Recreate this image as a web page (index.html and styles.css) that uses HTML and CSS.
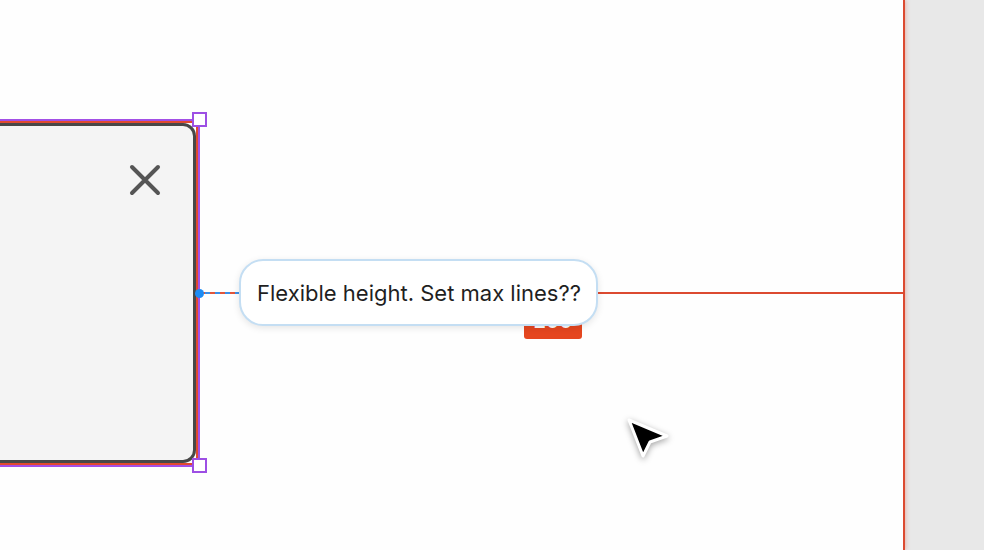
FILE: index.html
```html
<!DOCTYPE html>
<html lang="en">
<head>
    <meta charset="UTF-8">
    <meta name="viewport" content="width=device-width, initial-scale=1.0">
    <title>Spec canvas</title>
    <link rel="stylesheet" href="styles.css">
</head>
<body>
    <div class="app">
        <div class="canvas">
            <!-- selected frame -->
            <div class="selection">
                <div class="selection-inner">
                    <div class="card">
                        <svg class="close-icon" width="32" height="32" viewBox="0 0 32 32">
                            <path d="M3 3 L29 29 M29 3 L3 29" stroke="#555" stroke-width="4" stroke-linecap="round" fill="none"/>
                        </svg>
                    </div>
                </div>
            </div>
            <div class="handle handle-top"></div>
            <div class="handle handle-bottom"></div>

            <div class="connector"></div>
            <div class="anchor-dot"></div>
            <div class="measure-line"></div>

            <div class="badge">200</div>
            <div class="note">Flexible height. Set max lines??</div>

            <svg class="cursor" width="50" height="50" viewBox="0 0 50 50">
                <path d="M5 4 L43 20 L26 26 L19 40 Z" fill="#000" stroke="#fff" stroke-width="3" stroke-linejoin="round"/>
            </svg>
        </div>
        <div class="side-panel"></div>
    </div>
</body>
</html>
```

FILE: styles.css
```css
body {
    margin: 0;
    font-family: Inter, "Noto Sans", sans-serif;
    background: #fff;
    overflow: hidden;
}
.app {
    display: flex;
    height: 550px;
    width: 984px;
}
.canvas {
    position: relative;
    width: 903px;
    flex: none;
    background: #fefefe;
    border-right: 2px solid #dc4a30;
    box-shadow: 1px 0 4px rgba(230, 90, 60, 0.35);
    z-index: 1;
}
.side-panel {
    flex: 1;
    background: #e8e8e8;
}
.selection {
    position: absolute;
    left: -40px;
    top: 119px;
    width: 238px;
    height: 344px;
    border: 2px solid #a24fe6;
    border-left: none;
}
.selection-inner {
    height: 100%;
    box-sizing: border-box;
    border: 2px solid #e0492f;
    border-left: none;
}
.card {
    position: relative;
    height: 100%;
    box-sizing: border-box;
    background: #f4f4f4;
    border: 3px solid #474747;
    border-left: none;
    border-radius: 0 13px 13px 0;
}
.close-icon {
    position: absolute;
    left: 169px;
    top: 38px;
}
.handle {
    position: absolute;
    left: 192px;
    width: 11px;
    height: 11px;
    background: #fff;
    border: 2px solid #9d4fe4;
}
.handle-top {
    top: 112px;
}
.handle-bottom {
    top: 458px;
}
.connector {
    position: absolute;
    left: 200px;
    top: 292px;
    width: 40px;
    height: 2px;
    background: repeating-linear-gradient(90deg, #e0553a 0 5px, #3b8fe6 5px 10px);
}
.anchor-dot {
    position: absolute;
    left: 195px;
    top: 289px;
    width: 9px;
    height: 9px;
    border-radius: 50%;
    background: #1c8cf5;
}
.measure-line {
    position: absolute;
    left: 598px;
    top: 292px;
    width: 305px;
    height: 2px;
    background: #dc4a30;
}
.badge {
    position: absolute;
    left: 524px;
    top: 308px;
    width: 58px;
    height: 31px;
    border-radius: 3px;
    background: #e5461f;
    color: #fff;
    font-size: 20px;
    font-weight: 600;
    line-height: 26px;
    text-align: center;
}
.note {
    position: absolute;
    left: 239px;
    top: 259px;
    width: 359px;
    height: 67px;
    box-sizing: border-box;
    padding: 0 16px;
    display: flex;
    align-items: center;
    background: #fff;
    border: 2px solid #c4def3;
    border-radius: 24px;
    box-shadow: 0 2px 7px rgba(0, 0, 0, 0.1);
    color: #1f1f1f;
    font-size: 22px;
    white-space: nowrap;
}
.cursor {
    position: absolute;
    left: 624px;
    top: 416px;
    filter: drop-shadow(0 2px 3px rgba(0, 0, 0, 0.35));
}
```
